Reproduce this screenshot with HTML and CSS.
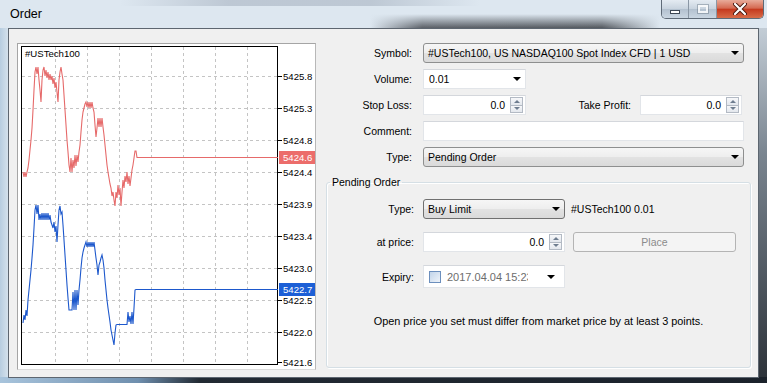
FILE: index.html
```html
<!DOCTYPE html>
<html lang="en">
<head>
  <meta charset="UTF-8">
  <title>Order</title>
  <link rel="stylesheet" href="styles.css">
</head>
<body>

  <div class="window">
    <div class="titlebar">
      <span class="title">Order</span>
      <div class="caption-btns">
        <div class="cap cap-min"><span class="min-glyph"></span></div>
        <div class="cap cap-max"><span class="max-glyph"></span></div>
        <div class="cap cap-close">
          <svg width="16" height="12" viewBox="0 0 16 12">
            <path d="M3 1 L13 11 M13 1 L3 11" stroke="#4a1a10" stroke-width="4" stroke-linecap="round"/>
            <path d="M3 1 L13 11 M13 1 L3 11" stroke="#fff" stroke-width="2.2" stroke-linecap="round"/>
          </svg>
        </div>
      </div>
    </div>

    <div class="client">
      <!-- chart, drawn in page coordinates -->
      <div class="chart">
        <svg width="297" height="325" viewBox="18 44 297 325">
          <rect x="18" y="44" width="297" height="325" fill="#fff"/>
          <g stroke="#c4c4c4" stroke-dasharray="3 3" stroke-width="1">
            <path d="M55.5 47V364 M87.5 47V364 M119.5 47V364 M151.5 47V364 M183.5 47V364 M215.5 47V364 M247.5 47V364"/>
            <path d="M22 76.5H277 M22 108.5H277 M22 140.5H277 M22 172.5H277 M22 204.5H277 M22 236.5H277 M22 268.5H277 M22 300.5H277 M22 332.5H277"/>
          </g>
          <rect x="21.5" y="46.5" width="256" height="318" fill="none" stroke="#000"/>
          <path d="M278 76.5h4 M278 108.5h4 M278 140.5h4 M278 172.5h4 M278 204.5h4 M278 236.5h4 M278 268.5h4 M278 300.5h4 M278 332.5h4 M278 362.5h4" stroke="#000"/>
          <text x="25" y="57" class="chart-txt">#USTech100</text>
          <g class="chart-txt">
            <text x="283" y="80">5425.8</text>
            <text x="283" y="112">5425.3</text>
            <text x="283" y="144">5424.8</text>
            <text x="283" y="176">5424.4</text>
            <text x="283" y="208">5423.9</text>
            <text x="283" y="240">5423.4</text>
            <text x="283" y="272">5423.0</text>
            <text x="283" y="304">5422.5</text>
            <text x="283" y="336">5422.0</text>
            <text x="283" y="366">5421.6</text>
          </g>
          <polyline fill="none" stroke="#e66a6a" stroke-width="1.1" points="23,172 24,177 25,172 26,177 27,172 28,168 29,160 30,150 31,140 32,128 33,110 34,90 35,72 36,67 37,74 38,67 39,80 40,90 41,102 42,80 43,70 44,67 45,76 46,70 47,78 48,72 49,80 50,74 51,80 52,76 53,84 54,78 55,88 56,82 57,92 58,102 59,80 60,72 61,67 62,74 63,80 64,95 65,110 66,125 67,140 68,152 69,165 70,172 71,158 72,172 73,160 74,168 75,155 76,166 77,155 78,162 79,152 80,145 81,132 82,120 83,112 84,108 85,104 86,102 87,107 88,102 89,108 90,102 91,108 92,102 93,108 94,112 95,125 96,137 97,128 98,118 99,127 100,118 101,127 102,118 103,127 104,135 105,145 106,155 107,165 108,172 109,178 110,184 111,188 112,196 113,192 114,200 115,206 116,192 117,198 118,185 119,195 120,188 121,206 122,192 123,180 124,188 125,176 126,182 127,172 128,184 129,176 130,186 131,178 132,170 133,165 134,158 135,151 136,151 137,157.5 278,157.5"/>
          <polyline fill="none" stroke="#1d58cc" stroke-width="1.1" points="23,323 24,315 25,320 26,310 27,316 28,300 29,290 30,280 31,270 32,258 33,245 34,228 35,210 36,205 37,214 38,205 39,220 40,214 41,220 42,213 43,220 44,213 45,220 46,213 47,220 48,213 49,220 50,215 51,222 52,225 53,228 54,222 55,232 56,226 57,242 58,225 59,210 60,206 61,214 62,212 63,225 64,240 65,255 66,270 67,285 68,298 69,310 72,310 73,292 74,310 75,290 76,310 77,290 78,305 79,290 80,280 81,268 82,258 83,252 84,248 85,245 86,242 87,247 88,242 89,247 90,242 91,247 92,242 93,247 94,242 95,250 96,258 97,265 98,275 99,265 100,262 101,258 102,255 103,260 104,268 105,280 106,290 107,300 108,308 109,315 110,322 111,330 112,335 113,340 114,345 115,333 116,325 117,324.5 127,324.5 128,312 129,322 130,316 131,324 132,312 133,324 134,308 135,290 136,289.5 278,289.5"/>
          <rect x="279" y="151" width="36" height="13" fill="#ec6d6b"/>
          <text x="283" y="161" class="chart-txt tag-txt">5424.6</text>
          <rect x="279" y="283" width="36" height="13" fill="#1c5fd6"/>
          <text x="283" y="293" class="chart-txt tag-txt">5422.7</text>
        </svg>
      </div>

      <div class="form">
        <div class="row">
          <label class="lbl">Symbol:</label>
          <div class="combo wide">#USTech100, US NASDAQ100 Spot Index CFD | 1 USD<span class="arrow"></span></div>
        </div>
        <div class="row">
          <label class="lbl">Volume:</label>
          <div class="edit small">0.01<span class="arrow"></span></div>
        </div>
        <div class="row">
          <label class="lbl">Stop Loss:</label>
          <div class="edit small num">0.0<span class="spin"><i class="up"></i><i class="down"></i></span></div>
          <label class="lbl lbl-tp">Take Profit:</label>
          <div class="edit tp num">0.0<span class="spin"><i class="up"></i><i class="down"></i></span></div>
        </div>
        <div class="row">
          <label class="lbl">Comment:</label>
          <div class="edit wide"></div>
        </div>
        <div class="row">
          <label class="lbl">Type:</label>
          <div class="combo wide">Pending Order<span class="arrow"></span></div>
        </div>

        <fieldset class="group">
          <legend>Pending Order</legend>
          <div class="group-body">
            <div class="grow">
              <label class="glbl">Type:</label>
              <div class="combo mid dark">Buy Limit<span class="arrow"></span></div>
              <span class="sym-info">#USTech100 0.01</span>
            </div>
            <div class="grow">
              <label class="glbl">at price:</label>
              <div class="edit mid num">0.0<span class="spin"><i class="up"></i><i class="down"></i></span></div>
              <button class="place" disabled>Place</button>
            </div>
            <div class="grow tall">
              <label class="glbl">Expiry:</label>
              <div class="edit mid date">
                <span class="check"></span>
                <span class="date-txt">2017.04.04 15:23</span>
                <span class="arrow"></span>
              </div>
            </div>
            <p class="note">Open price you set must differ from market price by at least 3 points.</p>
          </div>
        </fieldset>
      </div>
    </div>
  </div>

</body>
</html>
```

FILE: styles.css
```css
* {
  box-sizing: border-box;
}

body {
  margin: 0;
  width: 767px;
  height: 383px;
  overflow: hidden;
  font-family: 'Liberation Sans', Arial, sans-serif;
  font-size: 10.5px;
  color: #000;
}

.window {
  width: 767px;
  height: 383px;
  display: flex;
  flex-direction: column;
  background:
    linear-gradient(to right, #a8c4dc 0, #6f8fae 18%, #222a33 26%, #1b222b 100%) left bottom / 100% 6px no-repeat,
    linear-gradient(to bottom, #d3dde6 0, #7a8590 40%, #2b3138 100%) right top / 8px 100% no-repeat,
    linear-gradient(to right, #b7cde0 0, #d4e1ec 8px, #d4e1ec 100%);
}

/* aero glass: light base with a dark blurred band behind the right half */
.titlebar {
  height: 28px;
  display: flex;
  align-items: flex-start;
  background-color: #dde7f0;
  background-image:
    linear-gradient(to bottom, rgba(221, 231, 240, 1) 0, rgba(221, 231, 240, 0) 100%),
    linear-gradient(to right, rgba(70, 74, 80, 0), #5b6067 18%, #53585e 80%, rgba(70, 74, 80, 0)),
    linear-gradient(to right, rgba(130, 142, 160, 0), rgba(130, 142, 160, 0.35) 30%, rgba(130, 142, 160, 0.35) 70%, rgba(130, 142, 160, 0));
  background-size: 290px 14px, 290px 14px, 360px 6px;
  background-position: 370px 14px, 370px 14px, 120px 0;
  background-repeat: no-repeat;
}

.title {
  font-size: 12.5px;
  margin: 7px 0 0 10px;
  line-height: 14px;
}

.caption-btns {
  margin-left: auto;
  margin-right: 3px;
  display: flex;
  border: 1px solid #5f6b78;
  border-top: none;
  border-radius: 0 0 5px 5px;
  overflow: hidden;
}

.cap {
  height: 18px;
  display: flex;
  align-items: center;
  justify-content: center;
}

.cap-min, .cap-max {
  background: linear-gradient(to bottom, #e4ebf2, #c9d4df 48%, #b3c1cf 52%, #cad6e2);
  border-right: 1px solid #8a97a5;
}

.cap-min { width: 27px; }
.cap-max { width: 28px; }

.min-glyph {
  width: 10px;
  height: 4px;
  margin-top: 6px;
  background: #fff;
  border: 1px solid #3c4754;
}

.max-glyph {
  width: 10px;
  height: 8px;
  border: 2px solid rgba(255, 255, 255, 0.8);
  outline: 1px solid rgba(90, 105, 120, 0.4);
}

.cap-close {
  width: 46px;
  background: linear-gradient(to bottom, #e8ab9a, #d56a52 45%, #c53a1f 52%, #d86c48);
}

.client {
  flex: 1;
  margin: 0 8px 5px 8px;
  border: 1px solid #5d6670;
  background: #f0f0f0;
  display: flex;
  padding: 14px 0 0 8px;
}

.chart {
  width: 299px;
  height: 327px;
  border: 1px solid #a5a5a5;
  border-right-color: #b8b8b8;
  border-bottom-color: #dcdcdc;
}

.chart svg {
  display: block;
}

.chart-txt {
  font-family: 'Liberation Sans', Arial, sans-serif;
  font-size: 9.6px;
  fill: #000;
}

.tag-txt {
  fill: #fff;
}

.form {
  margin-left: 10px;
  width: 425px;
}

.row {
  display: flex;
  align-items: center;
  height: 20px;
  margin-bottom: 6px;
}

.lbl {
  width: 86px;
  margin-right: 11px;
  text-align: right;
}

.lbl-tp {
  width: 105px;
  margin-right: 9px;
}

.combo {
  height: 20px;
  display: flex;
  align-items: center;
  padding-left: 4px;
  border: 1px solid #8e8f8f;
  border-radius: 3px;
  background: linear-gradient(to bottom, #f6f6f6, #eeeeee 48%, #e2e2e2 52%, #dadada);
}

.combo.dark {
  border-color: #707070;
}

.arrow {
  margin-left: auto;
  margin-right: 4px;
  width: 0;
  height: 0;
  border-top: 4px solid #000;
  border-left: 4px solid transparent;
  border-right: 4px solid transparent;
}

.edit {
  height: 20px;
  display: flex;
  align-items: center;
  padding-left: 5px;
  background: #fff;
  border: 1px solid #e2e5e9;
  border-top-color: #d4d7dc;
}

.wide { width: 321px; }
.small { width: 103px; }
.tp { width: 102px; }
.mid { width: 142px; }

.num {
  justify-content: flex-end;
  padding-left: 0;
}

.spin {
  width: 13px;
  height: 16px;
  margin: 0 2px 0 5px;
  display: flex;
  flex-direction: column;
}

.spin i {
  flex: 1;
  border: 1px solid #b3bac4;
  background: linear-gradient(to bottom, #f7f8fa, #e3e7ed);
  display: flex;
  align-items: center;
  justify-content: center;
}

.spin i + i {
  border-top: none;
}

.spin i::after {
  content: '';
  width: 0;
  height: 0;
  border-left: 3px solid transparent;
  border-right: 3px solid transparent;
}

.spin .up::after { border-bottom: 3px solid #6e7d8f; }
.spin .down::after { border-top: 3px solid #6e7d8f; }

.group {
  margin: 9px 0 0 0;
  padding: 0;
  width: 425px;
  height: 192px;
  border: 1px solid #d5dfe5;
  border-radius: 3px;
  box-shadow: inset 1px 1px 0 #fff, 1px 1px 0 #fff;
}

.group legend {
  margin-left: 3px;
  padding: 0 2px;
  line-height: 12px;
}

.group-body {
  padding-top: 11px;
}

.grow {
  display: flex;
  align-items: center;
  height: 20px;
  margin-bottom: 13px;
}

.grow.tall {
  height: 23px;
  margin-bottom: 0;
}

.glbl {
  width: 87px;
  margin-right: 9px;
  text-align: right;
}

.sym-info {
  margin-left: 6px;
}

.place {
  margin-left: 8px;
  width: 163px;
  height: 20px;
  font: inherit;
  color: #8b8b8b;
  background: #f4f4f4;
  border: 1px solid #b4b4b4;
  border-radius: 3px;
}

.date {
  height: 23px;
  padding-left: 5px;
}

.check {
  width: 12px;
  height: 12px;
  border: 1px solid #6c8fbd;
  background: linear-gradient(135deg, #c2d5ea, #eef3f9);
}

.date-txt {
  margin-left: 6px;
  width: 81px;
  overflow: hidden;
  white-space: nowrap;
  color: #6d6d6d;
  font-size: 11px;
}

.date .arrow {
  margin-right: 9px;
}

.note {
  margin: 27px 0 0 0;
  text-align: center;
  line-height: 12px;
  font-size: 10.9px;
}
```
